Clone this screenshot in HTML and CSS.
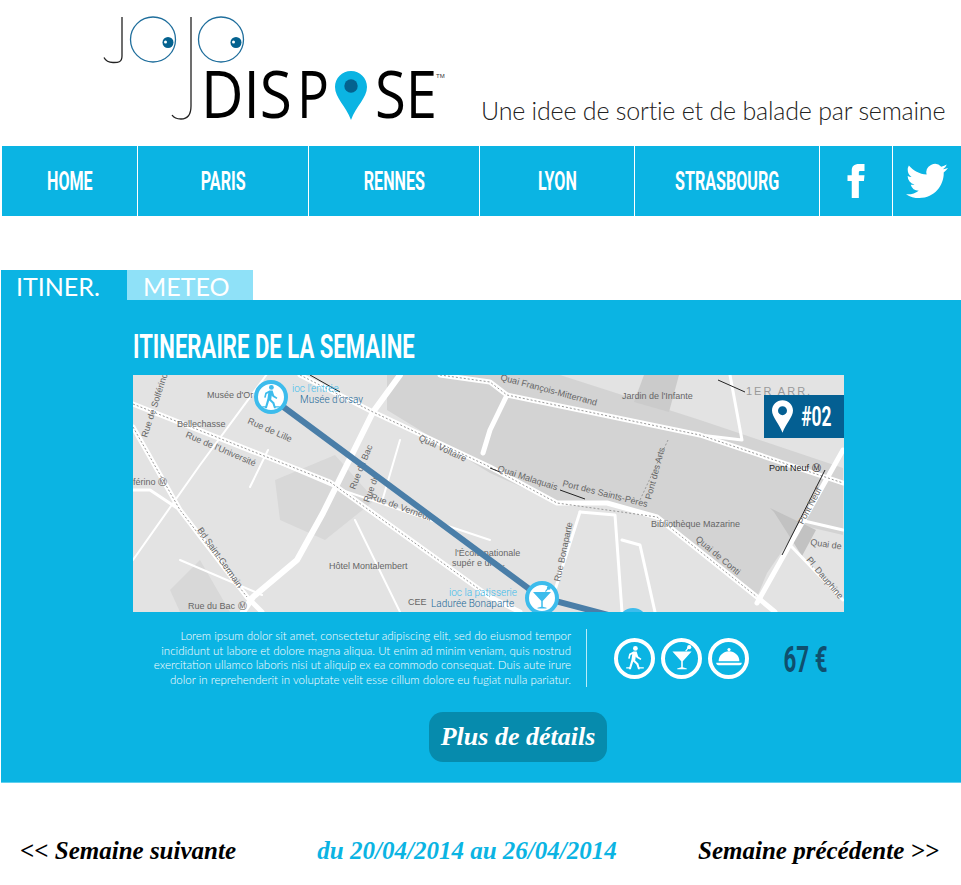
FILE: index.html
```html
<!DOCTYPE html>
<html lang="fr">
<head>
    <meta charset="UTF-8">
    <meta name="viewport" content="width=device-width, initial-scale=1.0">
    <title>JoJo Dispose</title>
    <link rel="stylesheet" href="styles.css">
</head>
<body>
    <svg class="sprites" width="0" height="0">
        <symbol id="ico-walk" viewBox="0 0 40 40">
            <circle cx="20.5" cy="8" r="3"/>
            <path d="M18 12h4l2 6 4 3-1 1.6-5-3-1-1.600-.8 5 4 4 2 7h-2.400l-2-6-4-3.500-3 9.500h-2.600l3.400-12 1-7-2.200 1.500-1 4.500-2-.4 1.400-6z"/>
            <path d="M9 31.500h6v1.500h-6zM25 31.500h6v1.500h-6z"/>
        </symbol>
        <symbol id="ico-glass" viewBox="0 0 40 40">
            <path d="M8 12h24l-11 12v7.500l5 1.500v1h-12v-1l5-1.500v-7.500z"/>
            <path d="M24 11l4-5 1.200 1-4 5z"/>
            <circle cx="29" cy="6.500" r="2.600"/>
        </symbol>
        <symbol id="ico-dish" viewBox="0 0 40 40">
            <circle cx="20" cy="9.500" r="2"/>
            <path d="M7 24c0-7 6-12.500 13-12.500s13 5.500 13 12.500z"/>
            <path d="M4 26h32c0 1.500-1 3-3 3h-26c-2 0-3-1.500-3-3z"/>
        </symbol>
        <symbol id="ico-pin" viewBox="0 0 22 34">
            <path fill-rule="evenodd" d="M11 0c6 0 11 4.700 11 10.800 0 6.700-7.700 14.200-11 23.200-3.300-9-11-16.500-11-23.200 0-6.100 5-10.800 11-10.800zm0 6.200a4.700 4.700 0 1 0 0 9.400 4.700 4.700 0 0 0 0-9.400z"/>
        </symbol>
    </svg>

    <header class="top">
        <svg class="logo" width="360" height="125" viewBox="100 0 360 125">
            <g fill="none" stroke="#222" stroke-width="1.300">
                <path d="M122 17v39c0 7-5 6.500-9 6.500-3 0-7-1-9-5"/>
                <path d="M191 17v89c0 9-4 13-10 13-4 0-7-1-9-4"/>
            </g>
            <g fill="none" stroke="#1f6e9c" stroke-width="1.300">
                <circle cx="153" cy="39.500" r="22.500"/>
                <circle cx="221" cy="39.500" r="22.500"/>
            </g>
            <circle cx="168" cy="42.500" r="5.500" fill="#04628f"/>
            <circle cx="236" cy="42.500" r="5.500" fill="#04628f"/>
            <circle cx="165.500" cy="42" r="1.500" fill="#fff"/>
            <circle cx="233.500" cy="42" r="1.500" fill="#fff"/>
            <g class="logo-word">
                <text x="201" y="118" textLength="91" lengthAdjust="spacingAndGlyphs">DIS</text>
                <text x="297" y="118" textLength="32" lengthAdjust="spacingAndGlyphs">P</text>
                <text x="375" y="118" textLength="62" lengthAdjust="spacingAndGlyphs">SE</text>
            </g>
            <text class="logo-tm" x="436" y="78">TM</text>
            <path d="M351 71c9 0 16 7 16 16 0 11-11 19-16 33-5-14-16-22-16-33 0-9 7-16 16-16z" fill="#0bb4e3"/>
            <circle cx="351" cy="86" r="6.700" fill="#04628f"/>
        </svg>
        <p class="tagline">Une idee de sortie et de balade par semaine</p>
    </header>

    <nav class="menu">
        <a class="menu-item home" href="#"><span class="squeeze">HOME</span></a>
        <a class="menu-item city" href="#"><span class="squeeze">PARIS</span></a>
        <a class="menu-item city" href="#"><span class="squeeze">RENNES</span></a>
        <a class="menu-item lyon" href="#"><span class="squeeze">LYON</span></a>
        <a class="menu-item stras" href="#"><span class="squeeze">STRASBOURG</span></a>
        <a class="menu-item social-f" href="#">
            <svg width="34" height="34" viewBox="0 0 24 24" fill="#fff"><path d="M9 8H6v4h3v12h5V12h3.600l.4-4h-4V6.300c0-1 .2-1.300 1.100-1.300H18V0h-3.800C10.600 0 9 1.600 9 4.600V8z"/></svg>
        </a>
        <a class="menu-item social-t" href="#">
            <svg width="42" height="42" viewBox="0 0 24 24" fill="#fff"><path d="M23.953 4.570a10 10 0 01-2.825.775 4.958 4.958 0 002.163-2.723c-.951.555-2.005.959-3.127 1.184a4.920 4.920 0 00-8.384 4.482C7.690 8.095 4.067 6.130 1.640 3.162a4.822 4.822 0 00-.666 2.475c0 1.710.870 3.213 2.188 4.096a4.904 4.904 0 01-2.228-.616v.060a4.923 4.923 0 003.946 4.827 4.996 4.996 0 01-2.212.085 4.936 4.936 0 004.604 3.417 9.867 9.867 0 01-6.102 2.105c-.390 0-.779-.023-1.170-.067a13.995 13.995 0 007.557 2.209c9.053 0 13.998-7.496 13.998-13.985 0-.210 0-.420-.015-.630A9.935 9.935 0 0024 4.590z"/></svg>
        </a>
    </nav>

    <div class="tabs">
        <div class="tab active">ITINER.</div>
        <div class="tab">METEO</div>
    </div>

    <section class="panel">
        <h1 class="panel-title"><span class="squeeze-left">ITINERAIRE DE LA SEMAINE</span></h1>

        <div class="map">
            <svg class="map-svg" width="711" height="237" viewBox="133 375 711 237">
                <rect x="133" y="375" width="711" height="237" fill="#e3e3e3"/>
                <path d="M387 375H560L700 420 843 468V535L800 525 767 573 757 597 657 517 607 503 557 503 490 473 387 410z" fill="#d3d3d3"/>
                <path d="M275 480l60-25 40 45-50 40-45-20z M170 590l30-30 30 52h-50z" fill="#d8d8d8"/>
                <rect x="633" y="375" width="55" height="50" fill="#cdcdcd" opacity=".0"/>
                <path d="M634 402l35 10 10-37h-35z" fill="#cbcbcb"/>
                <path d="M770 508l46 22-14 26-28-44z" fill="#c2c2c2"/>
                <g fill="none" stroke="#fff" stroke-linecap="round" stroke-linejoin="round">
                    <path stroke-width="5" d="M300 375L373 412 490 467 557 503 607 503 657 517 757 597 775 612"/>
                    <path stroke-width="5" d="M133 404L330 482 490 597 520 612"/>
                    <path stroke-width="5" d="M133 427L180 510 247 597 262 612"/>
                    <path stroke-width="6" d="M400 375L373 412 323 513 297 560 253 597 243 612"/>
                    <path stroke-width="5" d="M440 375L490 382 507 395 700 435 843 483"/>
                    <path stroke-width="5" d="M843 450L757 603"/>
                    <path stroke-width="5" d="M507 395L490 430 483 453"/>
                    <path stroke-width="3" d="M580 512L615 515 622 612"/>
                    <path stroke-width="3" d="M622 540L640 545 655 612"/>
                    <path stroke-width="3" d="M580 512L548 612"/>
                    <path stroke-width="2" d="M270 370L200 465M200 465L133 560"/>
                    <path stroke-width="3" d="M133 490L150 490 180 510"/>
                    <path stroke-width="2" d="M268 450L250 487M260 455L342 490 415 515 490 540"/>
                    <path stroke-width="2" d="M180 560L262 595M400 440L383 498M400 612L355 520"/>
                    <path stroke-width="3" d="M730 375L742 440 700 435"/>
                    <path stroke-width="3" d="M800 520L843 530M790 545L843 600"/>
                </g>
                <g fill="none" stroke="#999" stroke-width="1" stroke-dasharray="2 2">
                    <path d="M133 404L330 482 490 597"/>
                    <path d="M300 375L373 412 490 467 557 503 657 517 757 597"/>
                    <path d="M133 427L180 510 247 597"/>
                    <path d="M440 375L490 382 507 395 700 435 843 483"/>
                    <path d="M668 440L640 500"/>
                </g>
                <g fill="none" stroke="#222" stroke-width="1">
                    <path d="M310 375L340 392M718 380L745 392M560 490L585 499M490 468L500 472M825 470L782 555"/>
                </g>
                <g class="map-label">
                    <text x="207" y="398">Musée d'Or</text>
                    <text x="177" y="427">Bellechasse</text>
                    <text x="133" y="485">férino Ⓜ</text>
                    <text x="329" y="569">Hôtel Montalembert</text>
                    <text x="188" y="609">Rue du Bac Ⓜ</text>
                    <text x="408" y="605">CEE</text>
                    <text x="455" y="556">l'École nationale</text>
                    <text x="452" y="566">supér e ure...</text>
                    <text x="622" y="399">Jardin de l'Infante</text>
                    <text x="651" y="527">Bibliothèque Mazarine</text>
                    <text x="769" y="471" fill="#222">Pont Neuf Ⓜ</text>
                    <text x="746" y="395" class="arr">1ER ARR.</text>
                    <text transform="translate(147 438) rotate(-72)">Rue de Solférino</text>
                    <text transform="translate(247 423) rotate(24)">Rue de Lille</text>
                    <text transform="translate(185 437) rotate(23)">Rue de l'Université</text>
                    <text transform="translate(355 490) rotate(-68)">Rue du Bac</text>
                    <text transform="translate(369 503) rotate(-70)">Rue du</text>
                    <text transform="translate(418 440) rotate(25)">Quai Voltaire</text>
                    <text transform="translate(370 499) rotate(20)">Rue de Verneuil</text>
                    <text transform="translate(197 530) rotate(55)">Bd Saint-Germain</text>
                    <text transform="translate(500 380) rotate(15)">Quai François-Mitterrand</text>
                    <text transform="translate(497 471) rotate(18)">Quai Malaquais</text>
                    <text transform="translate(562 486) rotate(14)">Port des Saints-Pères</text>
                    <text transform="translate(651 500) rotate(-75)">Pont des Arts</text>
                    <text transform="translate(695 540) rotate(40)">Quai de Conti</text>
                    <text transform="translate(560 582) rotate(-78)">Rue Bonaparte</text>
                    <text transform="translate(803 525) rotate(-62)">Pont Neuf</text>
                    <text transform="translate(810 545) rotate(8)">Quai de</text>
                    <text transform="translate(806 560) rotate(50)">Pl. Dauphine</text>
                </g>
                <path d="M270 397L540 597 635 622" fill="none" stroke="#4a7ea8" stroke-width="6"/>
                <g class="marker">
                    <circle cx="271" cy="397" r="15"/>
                    <use href="#ico-walk" x="255" y="381" width="32" height="32"/>
                    <circle cx="542" cy="598" r="15"/>
                    <use href="#ico-glass" x="527" y="583" width="30" height="30"/>
                    <circle cx="633" cy="623" r="13"/>
                </g>
                <text class="mk-top" x="292" y="392">ioc l'entrée</text>
                <text class="mk-sub" x="300" y="403">Musée d'orsay</text>
                <text class="mk-top" x="449" y="596">ioc la patisserie</text>
                <text class="mk-sub" x="431" y="607">Ladurée Bonaparte</text>
            </svg>
            <div class="badge">
                <svg width="21" height="33" fill="#fff"><use href="#ico-pin"/></svg>
                <span class="squeeze">#02</span>
            </div>
        </div>

        <div class="summary">
            <p class="lorem">Lorem ipsum dolor sit amet, consectetur adipiscing elit, sed do eiusmod tempor incididunt ut labore et dolore magna aliqua. Ut enim ad minim veniam, quis nostrud exercitation ullamco laboris nisi ut aliquip ex ea commodo consequat. Duis aute irure dolor in reprehenderit in voluptate velit esse cillum dolore eu fugiat nulla pariatur.</p>
            <div class="steps">
                <span class="step"><svg width="32" height="32" fill="#fff"><use href="#ico-walk"/></svg></span>
                <span class="step"><svg width="32" height="32" fill="#fff"><use href="#ico-glass"/></svg></span>
                <span class="step"><svg width="32" height="32" fill="#fff"><use href="#ico-dish"/></svg></span>
            </div>
            <div class="price"><span class="squeeze">67 €</span></div>
        </div>

        <a class="more" href="#">Plus de détails</a>
    </section>

    <footer class="weeks">
        <a class="week-link" href="#"><b>&lt;&lt;</b> Semaine suivante</a>
        <span class="week-now">du 20/04/2014 au 26/04/2014</span>
        <a class="week-link" href="#">Semaine précédente <b>&gt;&gt;</b></a>
    </footer>
</body>
</html>
```

FILE: styles.css
```css
* {
    margin: 0;
    padding: 0;
    box-sizing: border-box;
}

body {
    font-family: "Lato", sans-serif;
    background: #fff;
    color: #000;
    overflow-x: hidden;
}

a {
    color: inherit;
    text-decoration: none;
}

.sprites {
    display: block;
    height: 0;
}

.squeeze,
.squeeze-left {
    display: inline-block;
    font-family: "Roboto", sans-serif;
    font-weight: 700;
    white-space: nowrap;
}

.squeeze {
    transform: scaleX(0.62);
}

.squeeze-left {
    transform: scaleX(0.67);
    transform-origin: left center;
}

/* header */
.top {
    height: 146px;
    padding-left: 100px;
    display: flex;
    align-items: flex-start;
}

.logo {
    display: block;
    flex: none;
}

.logo-word {
    font-family: "Open Sans", sans-serif;
    font-size: 65px;
    fill: #000;
}

.logo-tm {
    font-family: "Liberation Sans", sans-serif;
    font-size: 6px;
    fill: #333;
}

.tagline {
    margin: 94px 0 0 21px;
    font-size: 25px;
    font-weight: 300;
    line-height: 32px;
    white-space: nowrap;
    color: #222;
    letter-spacing: -0.2px;
}

/* menu */
.menu {
    height: 70px;
    margin-left: 2px;
    display: flex;
}

.menu-item {
    background: #0bb4e3;
    color: #fff;
    font-size: 26px;
    display: flex;
    align-items: center;
    justify-content: center;
    margin-right: 1px;
    flex: none;
}

.home { width: 135px; }
.city { width: 170px; }
.lyon { width: 154px; }
.stras { width: 184px; }
.social-f { width: 72px; }
.social-t { width: 68px; margin-right: 0; }

/* tabs */
.tabs {
    display: flex;
    margin: 54px 0 0 1px;
}

.tab {
    width: 126px;
    height: 30px;
    padding-left: 16px;
    background: #8fe1f8;
    color: #fff;
    font-size: 25px;
    line-height: 32px;
}

.tab.active {
    background: #0bb4e3;
    padding-left: 15px;
}

/* panel */
.panel {
    height: 483px;
    margin-left: 1px;
    padding: 25px 117px 0 132px;
    background: #0bb4e3;
    border-bottom: 1px solid #5fd0ef;
    color: #fff;
}

.panel-title {
    height: 50px;
    font-size: 33px;
    font-weight: 700;
    line-height: 40px;
}

.map {
    position: relative;
    width: 711px;
    height: 237px;
    overflow: hidden;
}

.map-svg {
    display: block;
}

.map-label {
    font-family: "Liberation Sans", sans-serif;
    font-size: 9px;
    fill: #666;
}

.arr {
    font-size: 11px;
    letter-spacing: 2px;
    fill: #999;
}

.marker circle {
    fill: #fff;
    stroke: #3dbcec;
    stroke-width: 4;
}

.marker use {
    fill: #3dbcec;
}

.mk-top,
.mk-sub {
    font-family: "Roboto", sans-serif;
    font-weight: 300;
    font-size: 10px;
}

.mk-top {
    fill: #3dbcec;
}

.mk-sub {
    fill: #1a6796;
}

.badge {
    position: absolute;
    top: 20px;
    right: 0;
    width: 80px;
    height: 43px;
    background: #045f92;
    color: #fff;
    font-size: 28px;
    display: flex;
    align-items: center;
    padding-left: 8px;
}

.badge .squeeze {
    margin-left: -1px;
}

.summary {
    display: flex;
    align-items: flex-start;
    padding-top: 17px;
    height: 100px;
}

.lorem {
    width: 439px;
    margin-left: 0;
    padding-right: 1px;
    font-size: 11.500px;
    font-weight: 300;
    line-height: 14.500px;
    text-align: right;
    flex: none;
}

.steps {
    margin-left: 14px;
    padding-left: 27px;
    height: 58px;
    border-left: 1px solid #b8ecf9;
    display: flex;
    align-items: center;
    gap: 6px;
    flex: none;
}

.step {
    width: 41px;
    height: 41px;
    border: 4px solid #fff;
    border-radius: 50%;
    display: flex;
    align-items: center;
    justify-content: center;
}

.step svg {
    display: block;
}

.price {
    width: 82px;
    margin-left: 17px;
    font-size: 36px;
    height: 58px;
    line-height: 58px;
    text-align: center;
    color: #0f4f6e;
}

.more {
    display: block;
    width: 178px;
    height: 50px;
    margin-left: 296px;
    background: #068bad;
    border-radius: 14px;
    color: #fff;
    font-family: "Liberation Serif", serif;
    font-style: italic;
    font-weight: 700;
    font-size: 26px;
    line-height: 50px;
    text-align: center;
}

/* footer */
.weeks {
    display: flex;
    justify-content: space-between;
    align-items: center;
    padding: 50px 22px 0 20px;
    font-family: "Liberation Serif", serif;
    font-style: italic;
    font-weight: 700;
    font-size: 25px;
    line-height: 36px;
}

.week-now {
    color: #0bb4e3;
}
```
